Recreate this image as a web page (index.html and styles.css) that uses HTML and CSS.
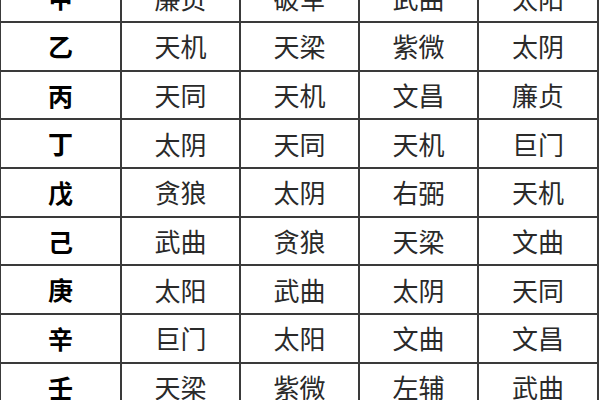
FILE: index.html
```html
<!DOCTYPE html>
<html lang="zh-CN">
<head>
<meta charset="utf-8">
<title>四化表</title>
<link rel="stylesheet" href="styles.css">
</head>
<body>
<div class="table">
  <div class="cell stem">甲</div><div class="cell">廉贞</div><div class="cell">破军</div><div class="cell">武曲</div><div class="cell">太阳</div>
  <div class="cell stem">乙</div><div class="cell">天机</div><div class="cell">天梁</div><div class="cell">紫微</div><div class="cell">太阴</div>
  <div class="cell stem">丙</div><div class="cell">天同</div><div class="cell">天机</div><div class="cell">文昌</div><div class="cell">廉贞</div>
  <div class="cell stem">丁</div><div class="cell">太阴</div><div class="cell">天同</div><div class="cell">天机</div><div class="cell">巨门</div>
  <div class="cell stem">戊</div><div class="cell">贪狼</div><div class="cell">太阴</div><div class="cell">右弼</div><div class="cell">天机</div>
  <div class="cell stem">己</div><div class="cell">武曲</div><div class="cell">贪狼</div><div class="cell">天梁</div><div class="cell">文曲</div>
  <div class="cell stem">庚</div><div class="cell">太阳</div><div class="cell">武曲</div><div class="cell">太阴</div><div class="cell">天同</div>
  <div class="cell stem">辛</div><div class="cell">巨门</div><div class="cell">太阳</div><div class="cell">文曲</div><div class="cell">文昌</div>
  <div class="cell stem">壬</div><div class="cell">天梁</div><div class="cell">紫微</div><div class="cell">左辅</div><div class="cell">武曲</div>
</div>
</body>
</html>
```
FILE: styles.css
```css
html, body {
  margin: 0;
  padding: 0;
  background: #ffffff;
  overflow: hidden;
  width: 600px;
  height: 400px;
}
.table {
  display: grid;
  grid-template-columns: 119px 117px 117px 117px 118px;
  grid-auto-rows: 46.7px;
  gap: 2px;
  padding: 0 2px 2px 1px;
  margin-top: -25.7px;
  width: max-content;
  background: #3a3a3a;
}
.cell {
  background: #ffffff;
  display: flex;
  align-items: center;
  justify-content: center;
  font-family: "Noto Sans CJK SC", "Noto Sans", sans-serif;
  font-size: 26px;
  font-weight: 400;
  color: #2a2a2a;
  line-height: 1;
}
.stem {
  font-weight: 700;
  font-size: 25px;
  color: #000000;
}
```
